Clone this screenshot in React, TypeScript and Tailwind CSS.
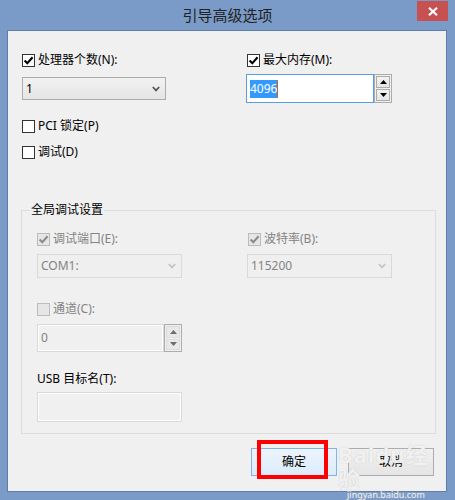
import React from 'react';

const font = 'font-["Noto_Sans","Noto_Sans_CJK_SC",sans-serif]';

function Check({ checked, disabled }: { checked?: boolean; disabled?: boolean }) {
  return (
    <span
      className={`flex h-[13px] w-[13px] shrink-0 items-center justify-center border ${
        disabled ? 'border-[#bcbcbc] bg-[#e6e6e6]' : 'border-[#333333] bg-white'
      }`}
    >
      {checked && (
        <svg width="11" height="11" viewBox="0 0 11 11">
          <path
            d="M1.6 5.4 L4.3 8.2 L9.6 2.2"
            fill="none"
            stroke={disabled ? '#8c8c8c' : '#000000'}
            strokeWidth="2.1"
          />
        </svg>
      )}
    </span>
  );
}

function CheckRow({
  label,
  checked,
  disabled,
}: {
  label: string;
  checked?: boolean;
  disabled?: boolean;
}) {
  return (
    <div className="flex h-[14px] items-center gap-[3px]">
      <Check checked={checked} disabled={disabled} />
      <span className={`text-[12px] leading-[14px] ${disabled ? 'text-[#838383]' : 'text-black'}`}>
        {label}
      </span>
    </div>
  );
}

function Chevron({ color }: { color: string }) {
  return (
    <svg width="8" height="6" viewBox="0 0 8 6">
      <path d="M0.8 1 L4 4.4 L7.2 1" fill="none" stroke={color} strokeWidth="1.8" />
    </svg>
  );
}

function Select({ value, disabled }: { value: string; disabled?: boolean }) {
  return (
    <div
      className={`flex h-[24px] w-[145px] items-center justify-between border pl-[3px] pr-[5px] text-[12px] ${
        disabled
          ? 'border-[#d9d9d9] bg-[#efefef] text-[#838383]'
          : 'border-[#acacac] bg-linear-to-b from-[#f2f2f2] to-[#e5e5e5] text-black'
      }`}
    >
      <span>{value}</span>
      <Chevron color={disabled ? '#c4c4c4' : '#555555'} />
    </div>
  );
}

function Arrow({ up, color }: { up?: boolean; color: string }) {
  return (
    <svg width="7" height="4" viewBox="0 0 7 4">
      <path d={up ? 'M0 4 L3.5 0 L7 4 Z' : 'M0 0 L3.5 4 L7 0 Z'} fill={color} />
    </svg>
  );
}

function SpinButtons({ disabled }: { disabled?: boolean }) {
  const btn = disabled
    ? 'border-[#dcdcdc] bg-[#e8e8e8]'
    : 'border-[#acacac] bg-linear-to-b from-[#f2f2f2] to-[#e5e5e5]';
  const c = disabled ? '#6d6d6d' : '#000000';
  return (
    <div className="flex h-full w-[18px] flex-col gap-[1px] border border-[#acacac] p-[1px]">
      <div className={`flex flex-1 items-center justify-center border ${btn}`}>
        <Arrow up color={c} />
      </div>
      <div className={`flex flex-1 items-center justify-center border ${btn}`}>
        <Arrow color={c} />
      </div>
    </div>
  );
}

export default function App() {
  return (
    <div className={`flex h-[500px] w-[455px] flex-col bg-[#7a9bc7] ${font}`}>
      {/* title bar */}
      <div className="relative flex h-[30px] items-center justify-center">
        <span className="text-[15px] leading-none text-[#222222]">引导高级选项</span>
        <div className="absolute right-[7px] top-[1px] flex h-[20px] w-[31px] items-center justify-center bg-[#c75050]">
          <svg width="10" height="9" viewBox="0 0 10 9">
            <path d="M1 0.8 L9 8.2 M9 0.8 L1 8.2" stroke="#ffffff" strokeWidth="2.2" />
          </svg>
        </div>
      </div>

      {/* client area */}
      <div className="mb-[8px] ml-[7px] mr-[8px] flex flex-1 flex-col border border-[#5f7ea8] bg-[#f0f0f0] pl-[13px] pt-[22px]">
        <div className="ml-[1px] flex">
          <div className="w-[225px]">
            <CheckRow label="处理器个数(N):" checked />
            <div className="mt-[10px] flex h-[23px] w-[144px] items-center justify-between border border-[#acacac] bg-linear-to-b from-[#f2f2f2] to-[#e5e5e5] pl-[3px] pr-[5px] text-[12px] text-black">
              <span>1</span>
              <Chevron color="#555555" />
            </div>
          </div>
          <div>
            <CheckRow label="最大内存(M):" checked />
            <div className="-ml-[1px] mt-[7px] flex h-[29px]">
              <div className="flex w-[128px] items-center border border-[#569de5] bg-white pl-[3px] text-[12px]">
                <span className="bg-[#3399ff] leading-[18px] text-white">4096</span>
                <span className="h-[18px] w-[1px] bg-[#c06a1a]" />
              </div>
              <SpinButtons />
            </div>
          </div>
        </div>

        <div className="ml-[1px] mt-[16px]">
          <CheckRow label="PCI 锁定(P)" />
        </div>
        <div className="ml-[1px] mt-[12px]">
          <CheckRow label="调试(D)" />
        </div>

        {/* group box */}
        <div className="relative mt-[51px] h-[224px] w-[415px] border border-[#dcdcdc] pl-[15px] pt-[21px]">
          <span className="absolute -top-[8px] left-[8px] bg-[#f0f0f0] px-[1px] text-[12px] leading-[14px] text-black">
            全局调试设置
          </span>
          <div className="flex">
            <div className="w-[210px]">
              <CheckRow label="调试端口(E):" checked disabled />
              <div className="mt-[8px]">
                <Select value="COM1:" disabled />
              </div>
            </div>
            <div>
              <div className="ml-[1px]">
                <CheckRow label="波特率(B):" checked disabled />
              </div>
              <div className="mt-[8px]">
                <Select value="115200" disabled />
              </div>
            </div>
          </div>

          <div className="mt-[24px]">
            <CheckRow label="通道(C):" disabled />
          </div>
          <div className="mt-[8px] flex h-[28px] w-[145px]">
            <div className="flex flex-1 items-center border border-[#d9d9d9] pl-[3px] text-[12px] text-[#838383] shadow-[inset_0_0_0_1px_#ffffff]">
              0
            </div>
            <SpinButtons disabled />
          </div>

          <div className="mt-[20px] h-[14px] text-[12px] leading-[14px] text-black">USB 目标名(T):</div>
          <div className="mt-[6px] h-[30px] w-[145px] border border-[#d9d9d9] bg-[#f0f0f0] shadow-[inset_0_0_0_1px_#ffffff]" />
        </div>

        {/* buttons */}
        <div className="mt-[14px] flex justify-end gap-[11px] pr-[12px]">
          <div className="relative">
            <div className="flex h-[28px] w-[86px] items-center justify-center border border-[#7eb4ea] bg-linear-to-b from-[#ecf4fc] to-[#dcecfc] text-[12px] text-black">
              确定
            </div>
            <div className="absolute -top-[8px] left-[6px] h-[39px] w-[71px] border-[4px] border-[#ff0000]" />
          </div>
          <div className="relative">
            <div className="flex h-[28px] w-[86px] items-center justify-center border border-[#acacac] bg-linear-to-b from-[#f0f0f0] to-[#e5e5e5] text-[12px] text-black">
              取消
            </div>
            {/* watermark */}
            <div className="pointer-events-none absolute -left-[10px] -top-[6px] flex flex-col items-center text-white/80 [text-shadow:0_0_1px_#b5b5b5]">
              <span className="text-[22px] font-bold leading-[24px] tracking-[1px]">Baidu经验</span>
              <span className="text-[9px] leading-[10px]">jingyan.baidu.com</span>
            </div>
          </div>
        </div>
      </div>
    </div>
  );
}
